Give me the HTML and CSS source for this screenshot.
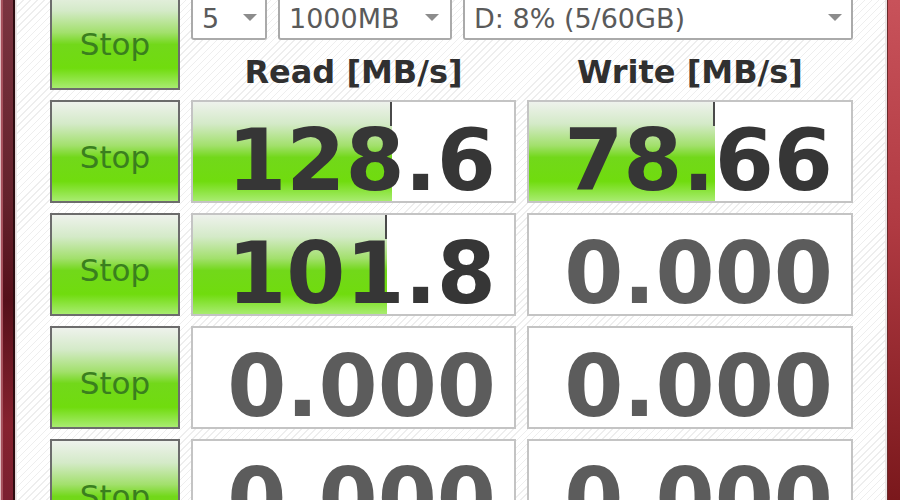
FILE: index.html
```html
<!DOCTYPE html>
<html>
<head>
<meta charset="utf-8">
<link rel="stylesheet" href="styles.css">
</head>
<body>
<div class="window">
  <div class="frame-left"></div>
  <main class="content">
    <div class="grid">
      <div class="stop">Stop</div>
      <div class="top">
        <div class="selects">
          <div class="sel sel1"><span>5</span><svg class="arrow" viewBox="0 0 14 7"><path d="M0 0H14L7 7Z"/></svg></div>
          <div class="sel sel2"><span>1000MB</span><svg class="arrow" viewBox="0 0 14 7"><path d="M0 0H14L7 7Z"/></svg></div>
          <div class="sel sel3"><span>D: 8% (5/60GB)</span><svg class="arrow" viewBox="0 0 14 7"><path d="M0 0H14L7 7Z"/></svg></div>
        </div>
        <div class="heads">
          <div>Read [MB/s]</div>
          <div>Write [MB/s]</div>
        </div>
      </div>

      <div class="stop">Stop</div>
      <div class="cell active"><div class="bar" style="width:199px"></div><span class="num">128.6</span></div>
      <div class="cell active"><div class="bar" style="width:186px"></div><span class="num">78.66</span></div>

      <div class="stop">Stop</div>
      <div class="cell active"><div class="bar" style="width:194px"></div><span class="num">101.8</span></div>
      <div class="cell"><span class="num">0.000</span></div>

      <div class="stop">Stop</div>
      <div class="cell"><span class="num">0.000</span></div>
      <div class="cell"><span class="num">0.000</span></div>

      <div class="stop">Stop</div>
      <div class="cell"><span class="num">0.000</span></div>
      <div class="cell"><span class="num">0.000</span></div>
    </div>
  </main>
  <div class="frame-right"></div>
</div>
</body>
</html>
```

FILE: styles.css
```css
html, body {
  margin: 0;
  padding: 0;
}
body {
  width: 900px;
  height: 500px;
  overflow: hidden;
  font-family: "DejaVu Sans", sans-serif;
}
.window {
  display: flex;
  height: 500px;
}
.frame-left {
  width: 17px;
  flex: none;
  background:
    linear-gradient(to right, #e2bcc0 0, #e2bcc0 1px, #a5505c 1px, #a5505c 3px, rgba(0,0,0,0) 3px, rgba(0,0,0,0) 13px, #2c0c10 13px, #2c0c10 15px, #ddd4d4 15px, #f2eeee 17px),
    linear-gradient(to bottom, #7a3440 0%, #64222c 40%, #55101a 60%, #86222f 85%, #7a2030 100%);
}
.frame-right {
  width: 15px;
  flex: none;
  background:
    linear-gradient(to right, #ebe6e6 0, #ebe6e6 2px, #6a2a2a 2px, #6a2a2a 3px, rgba(0,0,0,0) 3px),
    linear-gradient(to bottom, #c8525a 0%, #b03a42 45%, #7a181c 100%);
}
.content {
  flex: 1;
  overflow: hidden;
  padding-left: 33px;
  background-color: #fcfcfc;
  background-image: repeating-linear-gradient(135deg, #ffffff 0 4px, #eeeeee 4px 5px);
}
.grid {
  display: grid;
  grid-template-columns: 130px 325px 326px;
  column-gap: 11px;
  row-gap: 10px;
  grid-auto-rows: 103px;
  margin-top: -13px;
}
.stop {
  box-sizing: border-box;
  border: 2px solid #6c6c6c;
  background: linear-gradient(to bottom, #eef2ec 0%, #d4eac8 22%, #a2e06c 44%, #72d81a 56%, #70dc0e 80%, #a8ec70 100%);
  color: #3a7f1e;
  font-size: 31px;
  line-height: 31px;
  text-align: center;
  padding-top: 40px;
}
.top {
  grid-column: span 2;
  display: flex;
  flex-direction: column;
}
.selects {
  display: flex;
  gap: 11px;
  height: 53px;
}
.sel {
  box-sizing: border-box;
  height: 53px;
  border: 2px solid #aaaaaa;
  border-top: none;
  border-radius: 0 0 3px 3px;
  background: #ffffff;
  display: flex;
  justify-content: space-between;
  align-items: flex-start;
  padding: 18px 9px 0 9px;
  font-size: 27px;
  line-height: 27px;
  color: #5a5a5a;
}
.sel1 { width: 76px; padding-right: 8px; }
.sel2 { width: 174px; padding-right: 11px; }
.sel3 { width: 390px; padding-right: 9px; }
.arrow {
  width: 14px;
  height: 7px;
  margin-top: 9px;
  flex: none;
  fill: #8c8c8c;
}
.heads {
  display: grid;
  grid-template-columns: 325px 326px;
  column-gap: 11px;
  padding-top: 16px;
  font-weight: bold;
  font-size: 32px;
  line-height: 32px;
  color: #303030;
  text-align: center;
}
.cell {
  position: relative;
  box-sizing: border-box;
  border: 2px solid #c4c4c4;
  background: #ffffff;
  text-align: right;
  padding: 16px 18px 0 0;
  font-weight: bold;
  font-size: 85px;
  line-height: 85px;
  color: #5c5c5c;
}
.cell.active {
  color: #363636;
}
.bar {
  position: absolute;
  left: 0;
  top: 0;
  bottom: 0;
  background: linear-gradient(to bottom, #eef2ec 0%, #d4eac8 22%, #a2e06c 44%, #72d81a 56%, #70dc0e 80%, #a8ec70 100%);
}
.bar::after {
  content: "";
  position: absolute;
  right: 0;
  top: 0;
  width: 2px;
  height: 24px;
  background: #4a4a4a;
}
.num {
  position: relative;
}
```
